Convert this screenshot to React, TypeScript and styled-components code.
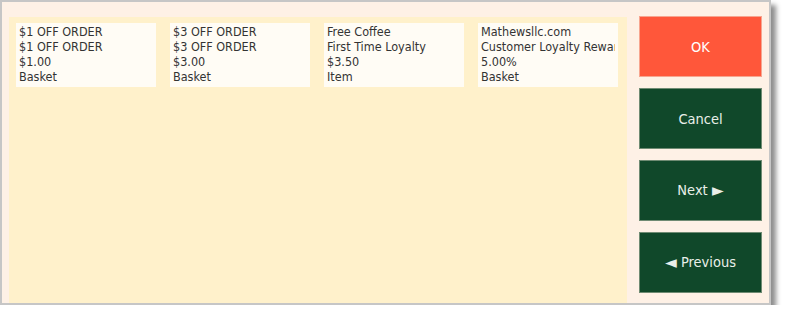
import styled, { createGlobalStyle } from "styled-components";

const GlobalStyle = createGlobalStyle`
  body {
    margin: 0;
    background: #ffffff;
    font-family: "DejaVu Sans Condensed", "DejaVu Sans", sans-serif;
  }
`;

type Coupon = {
  title: string;
  name: string;
  value: string;
  scope: string;
};

const coupons: Coupon[] = [
  { title: "$1 OFF ORDER", name: "$1 OFF ORDER", value: "$1.00", scope: "Basket" },
  { title: "$3 OFF ORDER", name: "$3 OFF ORDER", value: "$3.00", scope: "Basket" },
  { title: "Free Coffee", name: "First Time Loyalty", value: "$3.50", scope: "Item" },
  { title: "Mathewsllc.com", name: "Customer Loyalty Rewards", value: "5.00%", scope: "Basket" },
];

function App() {
  return (
    <>
      <GlobalStyle />
      <Window>
        <CouponPanel>
          {coupons.map((c) => (
            <CouponCard key={c.title}>
              <CardLine>{c.title}</CardLine>
              <CardLine>{c.name}</CardLine>
              <CardLine>{c.value}</CardLine>
              <CardLine>{c.scope}</CardLine>
            </CouponCard>
          ))}
        </CouponPanel>
        <ButtonColumn>
          <ActionButton $variant="primary">OK</ActionButton>
          <ActionButton>Cancel</ActionButton>
          <ActionButton>
            Next <Arrow>►</Arrow>
          </ActionButton>
          <ActionButton>
            <Arrow>◄</Arrow> Previous
          </ActionButton>
        </ButtonColumn>
      </Window>
    </>
  );
}

// STYLING
const Window = styled.div`
  box-sizing: border-box;
  width: 771px;
  height: 305px;
  display: flex;
  gap: 12px;
  padding: 0 7px 0 7px;
  background: #fef1e6;
  border: 2px solid #c6c6c6;
  box-shadow: 5px 5px 5px rgba(0, 0, 0, 0.45);
`;

const CouponPanel = styled.div`
  width: 618px;
  margin-top: 15px;
  display: flex;
  align-items: flex-start;
  gap: 14px;
  padding: 6px 7px;
  box-sizing: border-box;
  background: #fff1cb;
`;

const CouponCard = styled.div`
  width: 140px;
  height: 64px;
  box-sizing: border-box;
  padding: 1px 3px;
  background: #fffcf5;
  overflow: hidden;
`;

const CardLine = styled.div`
  font-size: 12.5px;
  line-height: 15px;
  color: #333333;
  white-space: nowrap;
  overflow: hidden;
`;

const ButtonColumn = styled.div`
  display: flex;
  flex-direction: column;
  gap: 11px;
  padding-top: 14px;
`;

const ActionButton = styled.button<{ $variant?: "primary" }>`
  width: 123px;
  height: 61px;
  box-sizing: border-box;
  border: 1px solid ${(p) => (p.$variant === "primary" ? "#f7a58f" : "#6f8b73")};
  background: ${(p) => (p.$variant === "primary" ? "#ff573a" : "#10482a")};
  color: ${(p) => (p.$variant === "primary" ? "#ffffff" : "#e9efe9")};
  font-family: "DejaVu Sans Condensed", "DejaVu Sans", sans-serif;
  font-size: 14.5px;
  padding: 0;
  cursor: pointer;
`;

const Arrow = styled.span`
  font-size: 17px;
  line-height: 1;
  vertical-align: -1px;
`;

export default App;
